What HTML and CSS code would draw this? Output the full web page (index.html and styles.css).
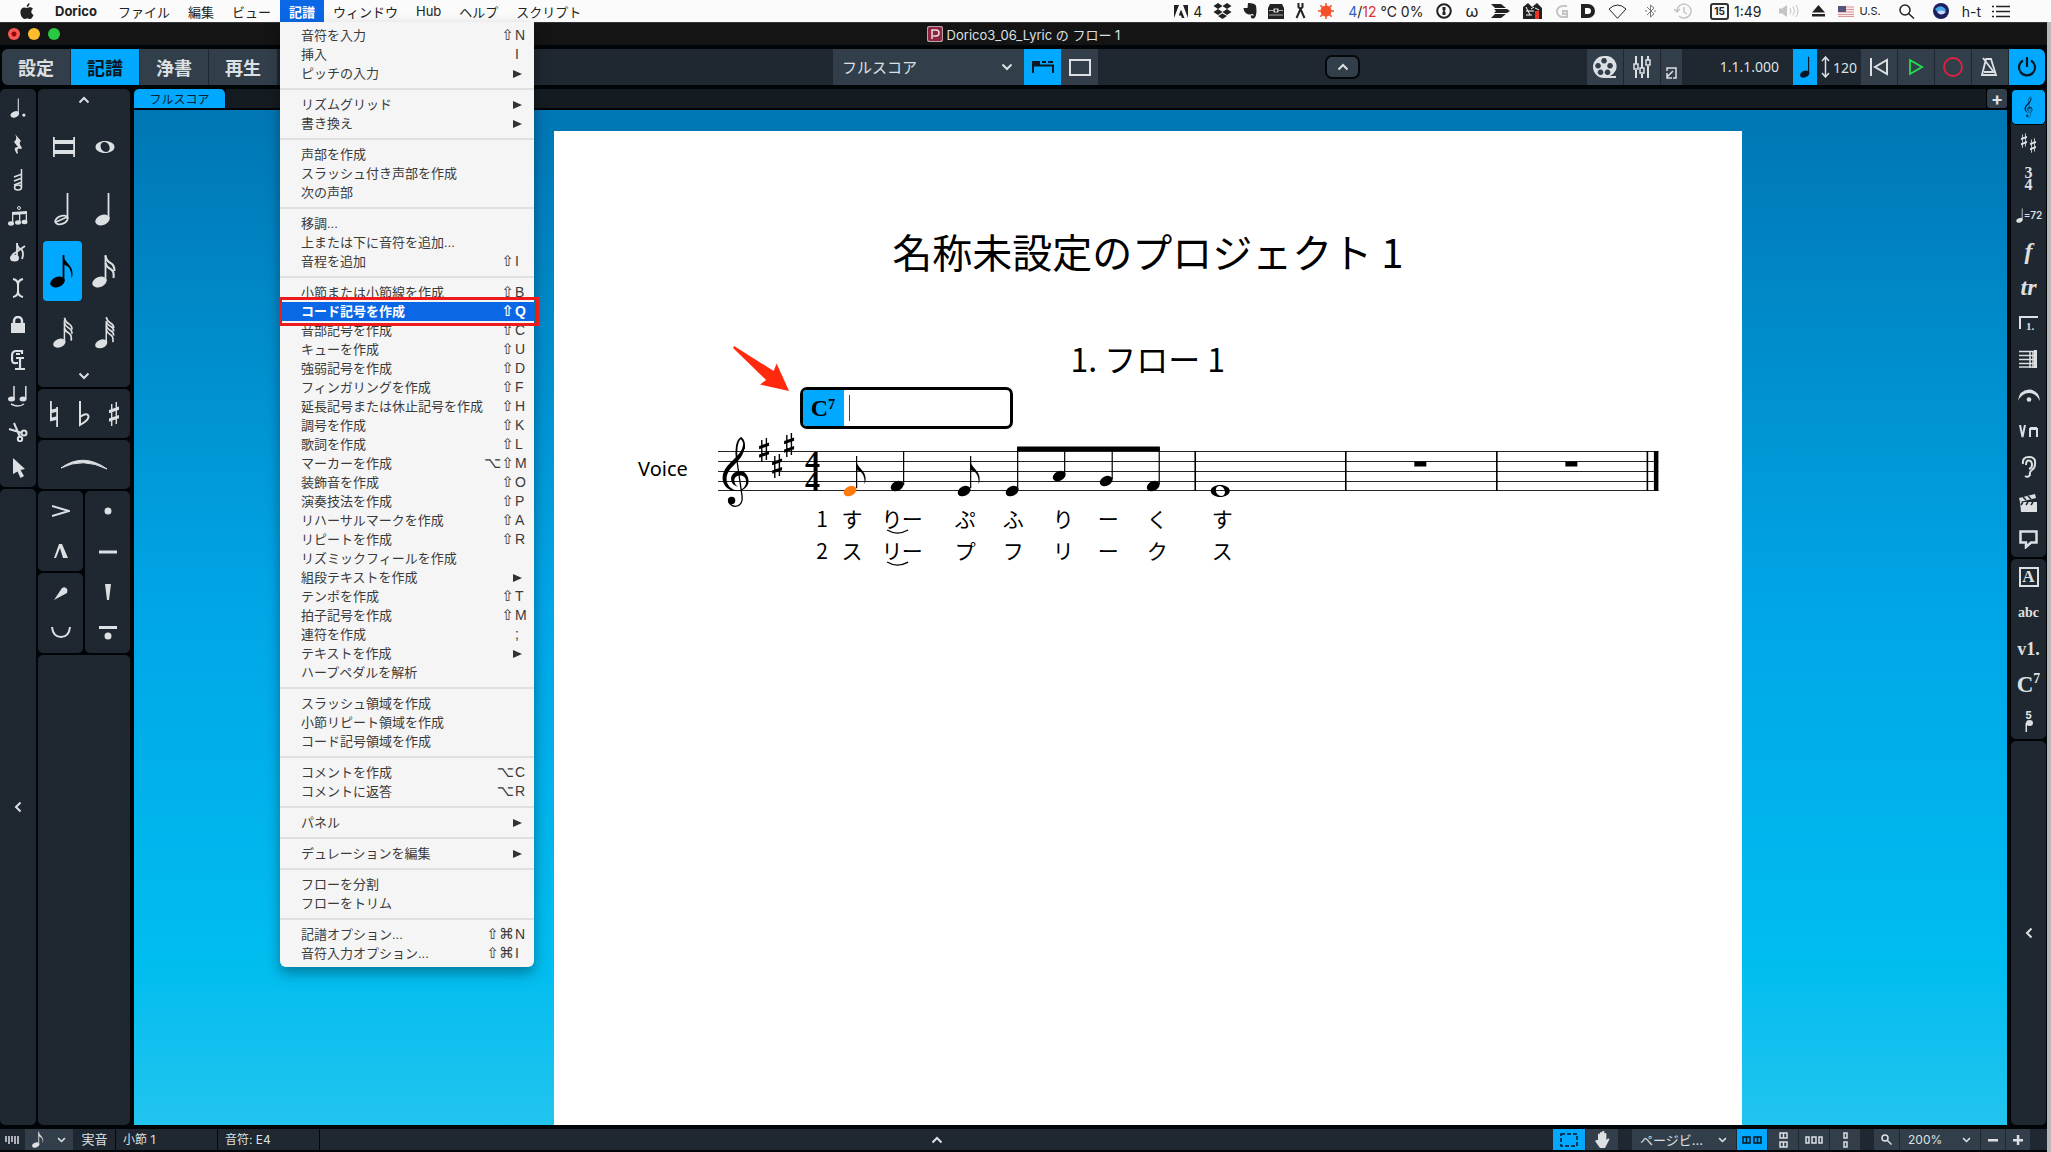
FILE: index.html
```html
<!DOCTYPE html>
<html lang="ja">
<head>
<meta charset="utf-8">
<title>Dorico3_06_Lyric の フロー 1</title>
<link rel="stylesheet" href="styles.css">
</head>
<body>
<svg class="defs" aria-hidden="true">
  <symbol id="clef" viewBox="721 436 29 72">
    <path d="M737 461C735 450 737 440 741 438C743.500 440 744.500 444 744 449" fill="none" stroke="currentColor" stroke-width="1.800"/>
    <path d="M744.800 445C744.500 455 738 461 733 466C728 471 726.500 475 726.500 479C726.500 485 731 489.500 737 490.500C728 492 722.500 485 722.500 478C722.500 469 730 463 735 458C740 453 742.500 450 743 444Z"/>
    <path d="M740 475.500C736 475.500 733.500 478 734.500 482C735 484 736 485.500 738 486.500C733.500 486 731 482.500 731 479C731 474.500 735 471 740 471C745 471 748.500 476 748.500 481C748.500 487 743 491.500 736 491.300C743 490 746 486 746 482C746 478 744 475.500 740 475.500Z"/>
    <path d="M736.500 458L742 496C743 502 740 506 735.500 506.300C732 506.300 729.500 504 728.500 501" fill="none" stroke="currentColor" stroke-width="1.300"/>
    <circle cx="731.500" cy="500.500" r="3.700"/>
  </symbol>
  <symbol id="head" viewBox="0 0 14 12"><ellipse cx="7" cy="6" rx="6.800" ry="4.700" transform="rotate(-27 7 6)"/></symbol>
  <symbol id="whole" viewBox="0 0 20 14"><path fill-rule="evenodd" d="M10 1C15 1 19.500 3.500 19.500 7S15 13 10 13S.5 10.500 .5 7S5 1 10 1ZM8 2.200C5 3 5 7 7 10C8.500 12 11.500 12.300 13 11.500C15.500 10 15 6 13 3.800C11.800 2.300 9.500 1.800 8 2.200Z"/></symbol>
  <symbol id="sharp" viewBox="0 0 12 28"><path d="M3 4h1.400v22H3zM7.600 2h1.400v22H7.600zM1 10L11 6.500v3.300L1 13.300zM1 18.500L11 15v3.300L1 21.800z"/></symbol>
  <symbol id="quarter" viewBox="0 0 24 34"><ellipse cx="9.500" cy="28" rx="7.500" ry="5" transform="rotate(-22 9.500 28)"/><path d="M14.600 1h1.800v26h-1.800z"/></symbol>
  <symbol id="flag" viewBox="0 0 10 24"><path d="M0 0C1 7 9.500 10 9.500 18C9.500 21 9 22.500 8.500 23.500C9 14 5 10.500 0 9.500Z"/></symbol>
  <symbol id="down" viewBox="0 0 12 8"><path d="M1.500 1.500L6 6L10.500 1.500" fill="none" stroke="currentColor" stroke-width="2"/></symbol>
  <symbol id="up" viewBox="0 0 12 8"><path d="M1.500 6.500L6 2L10.500 6.500" fill="none" stroke="currentColor" stroke-width="2"/></symbol>
  <symbol id="left" viewBox="0 0 8 12"><path d="M6.500 1.500L2 6L6.500 10.500" fill="none" stroke="currentColor" stroke-width="2"/></symbol>
</svg>

<header class="menubar">
  <nav class="menus">
    <button class="apple" aria-label="Apple"><svg width="14" height="17" viewBox="0 0 14 17"><path d="M9.500 0C9.800 2 8.200 4 6.700 4C6.500 2.200 8 .5 9.500 0ZM7 4.900C8 4.900 8.700 4.200 10 4.200C11.300 4.200 12.400 4.900 13 5.800C10.500 7.300 11 10.900 13.500 11.900C12.700 14 11.500 16 10.100 16C9 16 8.600 15.400 7.300 15.400S5.500 16 4.500 16C2.500 16 .4 12.300 .4 9.300C.4 6.200 2.300 4.400 4.200 4.400C5.400 4.400 6.300 4.900 7 4.900Z"/></svg></button>
    <button class="app-name">Dorico</button>
    <button>ファイル</button>
    <button>編集</button>
    <button>ビュー</button>
    <div class="open-menu">
      <button class="current">記譜</button>
      <div class="dropdown" role="menu">
        <button class="item">音符を入力<span class="mods">⇧</span><kbd>N</kbd></button>
        <button class="item">挿入<span class="mods"></span><kbd>I</kbd></button>
        <button class="item sub">ピッチの入力</button>
        <hr>
        <button class="item sub">リズムグリッド</button>
        <button class="item sub">書き換え</button>
        <hr>
        <button class="item">声部を作成</button>
        <button class="item">スラッシュ付き声部を作成</button>
        <button class="item">次の声部</button>
        <hr>
        <button class="item">移調...</button>
        <button class="item">上または下に音符を追加...</button>
        <button class="item">音程を追加<span class="mods">⇧</span><kbd>I</kbd></button>
        <hr>
        <button class="item">小節または小節線を作成<span class="mods">⇧</span><kbd>B</kbd></button>
        <button class="item chosen">コード記号を作成<span class="mods">⇧</span><kbd>Q</kbd></button>
        <button class="item">音部記号を作成<span class="mods">⇧</span><kbd>C</kbd></button>
        <button class="item">キューを作成<span class="mods">⇧</span><kbd>U</kbd></button>
        <button class="item">強弱記号を作成<span class="mods">⇧</span><kbd>D</kbd></button>
        <button class="item">フィンガリングを作成<span class="mods">⇧</span><kbd>F</kbd></button>
        <button class="item">延長記号または休止記号を作成<span class="mods">⇧</span><kbd>H</kbd></button>
        <button class="item">調号を作成<span class="mods">⇧</span><kbd>K</kbd></button>
        <button class="item">歌詞を作成<span class="mods">⇧</span><kbd>L</kbd></button>
        <button class="item">マーカーを作成<span class="mods">⌥⇧</span><kbd>M</kbd></button>
        <button class="item">装飾音を作成<span class="mods">⇧</span><kbd>O</kbd></button>
        <button class="item">演奏技法を作成<span class="mods">⇧</span><kbd>P</kbd></button>
        <button class="item">リハーサルマークを作成<span class="mods">⇧</span><kbd>A</kbd></button>
        <button class="item">リピートを作成<span class="mods">⇧</span><kbd>R</kbd></button>
        <button class="item">リズミックフィールを作成</button>
        <button class="item sub">組段テキストを作成</button>
        <button class="item">テンポを作成<span class="mods">⇧</span><kbd>T</kbd></button>
        <button class="item">拍子記号を作成<span class="mods">⇧</span><kbd>M</kbd></button>
        <button class="item">連符を作成<span class="mods"></span><kbd>;</kbd></button>
        <button class="item sub">テキストを作成</button>
        <button class="item">ハープペダルを解析</button>
        <hr>
        <button class="item">スラッシュ領域を作成</button>
        <button class="item">小節リピート領域を作成</button>
        <button class="item">コード記号領域を作成</button>
        <hr>
        <button class="item">コメントを作成<span class="mods">⌥</span><kbd>C</kbd></button>
        <button class="item">コメントに返答<span class="mods">⌥</span><kbd>R</kbd></button>
        <hr>
        <button class="item sub">パネル</button>
        <hr>
        <button class="item sub">デュレーションを編集</button>
        <hr>
        <button class="item">フローを分割</button>
        <button class="item">フローをトリム</button>
        <hr>
        <button class="item">記譜オプション...<span class="mods">⇧⌘</span><kbd>N</kbd></button>
        <button class="item">音符入力オプション...<span class="mods">⇧⌘</span><kbd>I</kbd></button>
      </div>
    </div>
    <button>ウィンドウ</button>
    <button>Hub</button>
    <button>ヘルプ</button>
    <button>スクリプト</button>
  </nav>
  <div class="extras">
    <span class="pair"><svg width="14" height="13" viewBox="0 0 14 13"><path d="M0 0h5L0 13zM14 0H9l5 13zM7 4.500L10.500 13H8L7 10.500H4.700z"/></svg>4</span>
    <svg class="tight" width="19" height="16" viewBox="0 0 19 16"><path d="M5 0l4.500 3L5 6L.5 3zM14 0l4.500 3L14 6L9.500 3zM5 6l4.500 3L5 12L.5 9zM14 6l4.500 3L14 12L9.500 9zM9.500 10.500L14 13l-4.500 3L5 13z"/></svg>
    <svg class="tight" width="14" height="16" viewBox="0 0 14 16"><path d="M5 0C9 0 13 1 13 3C14 8 13.500 15 10.500 15.500C8 16 7.500 14 8 12.500C9 12 10 12 10.500 13C11 11 9 10.500 8 11.500C6 12 1 11 .5 5H4.500z"/></svg>
    <svg class="tight" width="16" height="15" viewBox="0 0 16 15"><path d="M2 0h12l2 4v11H0V4z"/><path d="M1 6.500h14M1 11h14" stroke="#aaa"/><path d="M5.500 4.500h5v4h-5z" fill="#ddd"/><circle cx="8" cy="6.500" r="1.200"/></svg>
    <svg class="tight" width="11" height="16" viewBox="0 0 11 16" fill="none" stroke="currentColor" stroke-width="2"><path d="M3.500 0V4L5.500 6L7.500 4V0M5.500 6L1.500 15M5.500 6L9.500 15"/></svg>
    <svg class="sun tight" width="18" height="18" viewBox="0 0 18 18"><circle cx="9" cy="9" r="5.500"/><path d="M9 1v16M1 9h16M3.400 3.400l11.200 11.200M14.600 3.400L3.400 14.600" stroke="currentColor" stroke-width="1.500"/></svg>
    <span><b class="low">4</b>/<b class="high">12</b> ℃ 0%</span>
    <svg width="16" height="16" viewBox="0 0 16 16"><circle cx="8" cy="8" r="6.800" fill="none" stroke="currentColor" stroke-width="2"/><path d="M6.500 4h3v3l-1 1l1 1v3h-3V9l1-1l-1-1z"/></svg>
    <span class="omega">ω</span>
    <svg width="19" height="14" viewBox="0 0 19 14"><path d="M0 0h10l5 4H4zM3 5h13l3 2l-3 2H3l2-2zM0 14l4-4h11l-5 4z"/></svg>
    <svg width="19" height="16" viewBox="0 0 19 16"><path d="M0 4L5 0l4 4l5-4l5 5v11H0z"/><path d="M3 8h8M3 12h6M3 4l4 8M8 6l3-2M12 5l4 2" stroke="#fff"/><path d="M12 8h4v8h-4z" fill="#e32"/></svg>
    <svg class="faint" width="13" height="15" viewBox="0 0 13 15" fill="none" stroke="currentColor" stroke-width="2"><path d="M12 2H8a6 5.500 0 0 0 0 11h4V7H8v3h4"/></svg>
    <svg width="14" height="14" viewBox="0 0 14 14"><path d="M0 0h7a7 7 0 0 1 0 14H0z"/><path d="M4 4h3a3 3 0 0 1 0 6H4z" fill="#fff"/></svg>
    <svg width="19" height="15" viewBox="0 0 19 15" fill="none" stroke="currentColor"><path d="M1 5Q9.500-3 18 5L9.500 14.300z"/></svg>
    <svg class="airy" width="11" height="16" viewBox="0 0 11 16" fill="none" stroke="#777"><path d="M2 4l7 7l-3.500 3V2L9 5l-7 7M0 8h2M9 8h2"/></svg>
    <svg class="faint airy" width="18" height="16" viewBox="0 0 18 16" fill="none" stroke="currentColor" stroke-width="1.500"><path d="M3 8a7 7 0 1 1 2 5M0 6l3 3l3-3M10 4v5l3 2"/></svg>
    <span class="pair airy"><span class="cal">15</span>1:49</span>
    <svg class="faint airy" width="20" height="14" viewBox="0 0 20 14"><path d="M0 4.500h3L8 1v12L3 9.500H0z"/><path d="M11 4q2 3 0 6M14 2.500q3 4.500 0 9M17 1q4 6 0 12" fill="none" stroke="currentColor"/></svg>
    <svg width="13" height="12" viewBox="0 0 13 12"><path d="M6.500 0L13 7.500H0zM0 9h13v2.500H0z"/></svg>
    <span class="pair small"><svg width="16" height="11" viewBox="0 0 16 11"><path d="M0 0h16v11H0z" fill="#f4e9e9"/><path d="M0 1h16M0 3.500h16M0 6h16M0 8.500h16M0 10.500h16" stroke="#d99"/><path d="M0 0h8v6H0z" fill="#557"/></svg>U.S.</span>
    <svg class="airy" width="16" height="15" viewBox="0 0 16 15" fill="none" stroke="currentColor" stroke-width="1.500"><circle cx="6" cy="6" r="5"/><path d="M9.500 9.500L15 14.500"/></svg>
    <svg class="airy" width="16" height="16" viewBox="0 0 16 16"><circle cx="8" cy="8" r="8" fill="#1c1f5e"/><path d="M2 6q6-6 11 1q-5 8-11-1" fill="#4aa8e8"/><path d="M4 9q4 5 9 0q-5-3-9 0" fill="#c9d7f8"/></svg>
    <span>h-t</span>
    <svg class="tight" width="18" height="13" viewBox="0 0 18 13" fill="none" stroke="currentColor" stroke-width="1.500"><path d="M0 1.500h2M4 1.500h14M0 6.500h2M4 6.500h14M0 11.500h2M4 11.500h14"/></svg>
  </div>
</header>

<main class="window">
  <div class="titlebar">
    <div class="lights"><i class="close"></i><i class="mini"></i><i class="full"></i></div>
    <h1><svg width="16" height="16" viewBox="0 0 16 16"><rect width="16" height="16" rx="2" fill="#b9a3a8"/><rect x="1" y="1" width="14" height="14" rx="2" fill="#8e2440"/><path d="M5 13V4h4a3 3 0 0 1 0 6H6" fill="none" stroke="#e9dbe0" stroke-width="1.500"/></svg>Dorico3_06_Lyric の フロー 1</h1>
  </div>

  <div class="toolbar">
    <div class="modes"><button>設定</button><button class="on">記譜</button><button>浄書</button><button>再生</button></div>
    <div class="stretch-a"></div>
    <div class="layouts">
      <label class="picker"><select aria-label="レイアウト"><option>フルスコア</option></select><svg width="12" height="8"><use href="#down"/></svg></label>
      <button class="on" aria-label="タブ"><svg width="22" height="12" viewBox="0 0 22 12"><path d="M0 0h8v4H0zM10 0h4v2h-4zM16 0h5v2h-5z"/><path d="M1 12V4.500h20V12" fill="none" stroke="currentColor" stroke-width="2"/></svg></button>
      <button aria-label="ウィンドウ表示"><svg width="22" height="18" viewBox="0 0 22 18"><rect x="1" y="2" width="20" height="15" fill="none" stroke="currentColor" stroke-width="2"/></svg></button>
    </div>
    <div class="stretch-b"><button class="fold" aria-label="ツールバーを隠す"><svg width="12" height="8"><use href="#up"/></svg></button></div>
    <div class="transport">
      <button aria-label="ビデオ"><svg width="24" height="22" viewBox="0 0 24 22"><path fill-rule="evenodd" d="M11 0a11 10.500 0 0 1 6 20h6v2H11a11 11 0 0 1 0-22ZM11 2a2.800 2.800 0 1 0 .1 0ZM5 7a2.800 2.800 0 1 0 .1 0ZM17 7a2.800 2.800 0 1 0 .1 0ZM7.500 13.500a2.800 2.800 0 1 0 .1 0ZM14.500 13.500a2.800 2.800 0 1 0 .1 0Z"/></svg></button>
      <button aria-label="ミキサー"><svg width="18" height="22" viewBox="0 0 18 22" fill="none" stroke="currentColor" stroke-width="2"><path d="M3 0v8M3 14v8M9 0v12M9 18v4M15 0v4M15 10v12"/><path d="M1 8h4v5H1zM7 12h4v5H7zM13 4h4v5h-4z" stroke-width="1.500"/></svg></button>
      <button class="slim" aria-label="トランスポート"><svg width="11" height="12" viewBox="0 0 11 12" fill="none" stroke="currentColor" stroke-width="1.500"><path d="M1 4V1h9v10H7M7 4L1 10M1 6v5h5"/></svg></button>
      <output>1.1.1.000</output>
      <button class="on beat" aria-label="テンポモード"><svg width="14" height="22" viewBox="1 0 18 34"><use href="#quarter" width="24" height="34"/></svg></button>
      <span class="tempo"><svg width="9" height="22" viewBox="0 0 9 22" fill="none" stroke="currentColor" stroke-width="1.500"><path d="M4.500 1v20M1 5l3.500-4L8 5M1 17l3.500 4L8 17"/></svg>120</span>
      <button aria-label="先頭へ"><svg width="20" height="18" viewBox="0 0 20 18" fill="none" stroke="currentColor" stroke-width="2"><path d="M2 0v18M18 2v14L6 9z"/></svg></button>
      <button class="play" aria-label="再生"><svg width="16" height="18" viewBox="0 0 16 18" fill="none" stroke="currentColor" stroke-width="1.800"><path d="M2 2v14L14 9z"/></svg></button>
      <button class="rec" aria-label="録音"><svg width="20" height="20" viewBox="0 0 20 20" fill="none" stroke="currentColor" stroke-width="1.800"><circle cx="10" cy="10" r="9"/></svg></button>
      <button aria-label="クリック"><svg width="18" height="20" viewBox="0 0 18 20" fill="none" stroke="currentColor" stroke-width="1.800"><path d="M1 18L5 2h5l5 16zM12 14L2 1M3 15h11"/></svg></button>
      <button class="on power" aria-label="オーディオ"><svg width="20" height="20" viewBox="0 0 20 20" fill="none" stroke="currentColor" stroke-width="2.200"><path d="M6 3.500a8 8 0 1 0 8 0M10 0v10"/></svg></button>
    </div>
  </div>

  <div class="work">
    <div class="column tools">
      <div class="panel toolset">
        <button aria-label="付点"><svg width="20" height="20" viewBox="0 0 30 34"><use href="#quarter" width="24" height="34"/><circle cx="25" cy="29" r="2.800"/></svg></button>
        <button aria-label="休符"><svg width="10" height="20" viewBox="0 0 10 20"><path d="M2 0L8 7Q5 9 9 14L8 15Q3 13 5 19L4 20Q-1 13 5 13L1 8Q5 5 2 0Z"/></svg></button>
        <button aria-label="トレモロ"><svg width="10" height="22" viewBox="0 0 10 22" fill="none" stroke="currentColor" stroke-width="1.500"><path d="M8.500 0v18M1 8l8-3M1 12l8-3M1 16l8-3"/><ellipse cx="5" cy="18.500" rx="3.500" ry="2.500"/></svg></button>
        <button aria-label="連符"><svg width="20" height="20" viewBox="0 0 20 20"><path d="M4 6L19 5v3L4 9zM4 6h1.300v11H4zM11 6h1.300v10H11zM17.700 6H19v10h-1.300z"/><ellipse cx="3" cy="17.500" rx="3" ry="2.200"/><ellipse cx="10" cy="16.500" rx="3" ry="2.200"/><ellipse cx="16.500" cy="16" rx="3" ry="2.200"/><circle cx="11" cy="2" r="1.500" fill="none" stroke="currentColor"/></svg></button>
        <button aria-label="装飾音"><svg width="16" height="20" viewBox="0 0 16 20"><ellipse cx="4.500" cy="16" rx="4.500" ry="3.500"/><path d="M7 16V1q0 5 5 7q2 4 0 9M2 13L15 4" fill="none" stroke="currentColor" stroke-width="1.800"/></svg></button>
        <button aria-label="挿入"><svg width="12" height="20" viewBox="0 0 12 20" fill="none" stroke="currentColor" stroke-width="2"><path d="M1 1q5 1 5 6v6q0 5-5 6M11 1q-5 1-5 6v6q0 5 5 6"/></svg></button>
        <button aria-label="固定"><svg width="14" height="17" viewBox="0 0 14 17"><path d="M0 7h14v10H0z"/><path d="M3 8V5a4 4 0 0 1 8 0v3" fill="none" stroke="currentColor" stroke-width="2.500"/></svg></button>
        <button aria-label="留め具"><svg width="14" height="22" viewBox="0 0 14 22" fill="none" stroke="currentColor" stroke-width="2.200"><path d="M11 5V2H5Q1 2 1 7V10Q1 15 5 14H7M5 9h8M9 9v11M4 20h10M5 5h4"/></svg></button>
        <button aria-label="タイ"><svg width="20" height="22" viewBox="0 0 20 22"><ellipse cx="3.500" cy="14" rx="3.500" ry="2.500"/><ellipse cx="15" cy="14" rx="3.500" ry="2.500"/><path d="M6 1v13M17.800 1v13M3 19q7 4 13 0" fill="none" stroke="currentColor" stroke-width="1.500"/></svg></button>
        <button aria-label="はさみ"><svg width="20" height="20" viewBox="0 0 20 20" fill="none" stroke="currentColor" stroke-width="2"><path d="M1 7L14 11M6 1L12 15"/><circle cx="16" cy="11" r="2.500"/><circle cx="12" cy="17" r="2.200"/></svg></button>
        <button aria-label="選択"><svg width="13" height="20" viewBox="0 0 13 20"><path d="M1 0L13 11L8.500 12L12 18L8.500 20L5.500 13.500L1 16z"/></svg></button>
      </div>
      <div class="panel rest"><button aria-label="パネルを開く"><svg width="8" height="12"><use href="#left"/></svg></button></div>
    </div>

    <div class="column palette">
      <div class="panel durations">
        <button class="scroll" aria-label="上へ"><svg width="12" height="8"><use href="#up"/></svg></button>
        <div class="notes">
          <button aria-label="倍全音符"><svg width="24" height="20" viewBox="0 0 24 20"><path d="M1 0h1.800v20H1zM21.200 0H23v20h-1.800zM2 3h20v4H2zM2 13h20v4H2z"/></svg></button>
          <button aria-label="全音符"><svg width="20" height="14"><use href="#whole"/></svg></button>
          <button aria-label="2分音符"><svg width="24" height="34" viewBox="0 0 24 34"><ellipse cx="9.500" cy="28" rx="6.500" ry="4" transform="rotate(-22 9.500 28)" fill="none" stroke="currentColor" stroke-width="1.800"/><path d="M4 30L15 25" stroke="currentColor" stroke-width="1.500"/><path d="M14.600 1h1.800v26h-1.800z"/></svg></button>
          <button aria-label="4分音符"><svg width="24" height="34"><use href="#quarter"/></svg></button>
          <button class="on" aria-label="8分音符"><svg width="26" height="34" viewBox="2 0 26 34"><use href="#quarter" width="24" height="34"/><use href="#flag" x="15" y="1" width="10" height="24"/></svg></button>
          <button aria-label="16分音符"><svg width="26" height="34" viewBox="2 0 26 34"><use href="#quarter" width="24" height="34"/><path d="M15.500 2q1 5 5 7t4 8M15.500 9q1 4 5 6t3 9" fill="none" stroke="currentColor" stroke-width="2"/></svg></button>
          <button aria-label="32分音符"><svg width="22" height="34" viewBox="2 0 26 38"><use href="#quarter" y="3" width="24" height="34"/><path d="M15.500 1q1 5 5 7t4 7M15.500 7q1 4 5 6t4 7M15.500 13q1 4 5 6t3 9" fill="none" stroke="currentColor" stroke-width="2"/></svg></button>
          <button aria-label="64分音符"><svg width="20" height="34" viewBox="2 0 24 40"><use href="#quarter" y="5" width="24" height="34"/><path d="M15.500 1q1 5 5 7t4 6M15.500 6q1 4 5 6t4 6M15.500 11q1 4 5 6t4 6M15.500 16q1 4 5 6t3 9" fill="none" stroke="currentColor" stroke-width="2"/></svg></button>
        </div>
        <button class="scroll" aria-label="下へ"><svg width="12" height="8"><use href="#down"/></svg></button>
      </div>
      <div class="panel accidentals">
        <button aria-label="ナチュラル"><svg width="10" height="26" viewBox="0 0 10 26"><path d="M1 0h1.800v20H1zM7.200 6H9v20H7.200zM1 9L9 7v3.500L1 12.500zM1 17L9 15v3.500L1 20.500z"/></svg></button>
        <button aria-label="フラット"><svg width="12" height="26" viewBox="0 0 12 26"><path d="M2 0v24Q11 19 10.500 15Q9 11 2 16" fill="none" stroke="currentColor" stroke-width="2"/></svg></button>
        <button aria-label="シャープ"><svg width="12" height="28"><use href="#sharp"/></svg></button>
      </div>
      <div class="panel slur"><button aria-label="スラー"><svg width="46" height="11" viewBox="0 0 46 11"><path d="M0 9Q22-7 46 10Q22-2 0 9Z" stroke="currentColor"/></svg></button></div>
      <div class="articulations">
        <div class="panel"><button aria-label="アクセント"><svg width="18" height="12" viewBox="0 0 18 12" fill="none" stroke="currentColor" stroke-width="2"><path d="M0 1L17 6L0 11"/></svg></button><button aria-label="マルカート"><svg width="14" height="14" viewBox="0 0 14 14"><path d="M5 0h3l6 14h-5L6 4L2 14H0z"/></svg></button></div>
        <div class="panel tall"><button aria-label="スタッカート"><svg width="18" height="18" viewBox="0 0 18 18"><circle cx="9" cy="9" r="3.500"/></svg></button><button aria-label="テヌート"><svg width="18" height="4" viewBox="0 0 18 4"><path d="M0 .5h18v3H0z"/></svg></button><button aria-label="スタッカティッシモ"><svg width="8" height="16" viewBox="0 0 8 16"><path d="M1 0h6L5 16H3z"/></svg></button><button aria-label="ポルタート"><svg width="18" height="14" viewBox="0 0 18 14"><path d="M0 0h18v3H0z"/><circle cx="9" cy="10" r="3.500"/></svg></button></div>
        <div class="panel"><button aria-label="強勢"><svg width="14" height="13" viewBox="0 0 14 13"><path d="M0 13L8 1Q12-1 13.500 3L13 6z"/></svg></button><button aria-label="弱勢"><svg width="20" height="12" viewBox="0 0 20 12" fill="none" stroke="currentColor" stroke-width="2"><path d="M1 0q1 10 9 10t9-10"/></svg></button></div>
      </div>
      <div class="panel rest"></div>
    </div>

    <section class="canvas">
      <div class="tabs"><button class="tab">フルスコア</button><span class="track"></span><button class="add" aria-label="タブを追加">+</button></div>
      <div class="desk">
        <article class="page">
          <h2>名称未設定のプロジェクト 1</h2>
          <h3>1. フロー 1</h3>
          <div class="system">
            <svg class="staff" viewBox="554 384 1188 180">
              <path d="M718 451.500h940M718 461.500h940M718 471.500h940M718 481.500h940M718 490.500h940" stroke="#222" stroke-width="1"/>
              <path d="M1195 451v40M1345.500 451v40M1496.500 451v40M1647 451v40" stroke="#000" stroke-width="1.600"/>
              <path d="M1653.500 451h4.500v40h-4.500zM1414 461.500h12v5h-12zM1565 461.500h12v5h-12z"/>
              <use href="#clef" x="721" y="436" width="29" height="72"/>
              <use href="#sharp" x="758" y="436" width="12" height="28"/><use href="#sharp" x="771" y="452" width="12" height="28"/><use href="#sharp" x="783" y="431" width="12" height="28"/>
              <text class="meter" x="812.500" y="471">4</text><text class="meter" x="812.500" y="491">4</text>
              <g class="selected"><use href="#head" x="843" y="485" width="14" height="12"/></g>
              <use href="#head" x="890" y="480" width="14" height="12"/><use href="#head" x="957" y="485" width="14" height="12"/><use href="#head" x="1005" y="485" width="14" height="12"/><use href="#head" x="1052" y="470" width="14" height="12"/><use href="#head" x="1099" y="475" width="14" height="12"/><use href="#head" x="1146" y="480" width="14" height="12"/>
              <use href="#whole" x="1210" y="484" width="20" height="14"/>
              <path d="M856.500 456v32M903.500 451v34M970.500 456v32M1017.500 447v42M1064.500 447v27M1112 447v32M1159 447v37" stroke="#000" stroke-width="1.200"/>
              <use href="#flag" x="856" y="456" width="10" height="33"/><use href="#flag" x="970" y="456" width="10" height="33"/>
              <path d="M1017 446.500h142.500v4.500H1017z"/>
              <text class="name" x="638" y="476">Voice</text>
              <g class="lyric">
                <text x="822" y="527">1</text><text x="852" y="527">す</text><text x="892" y="527">り</text><text x="912" y="527">ー</text><text x="965" y="527">ぷ</text><text x="1013" y="527">ふ</text><text x="1063" y="527">り</text><text x="1108" y="527">ー</text><text x="1157" y="527">く</text><text x="1222" y="527">す</text>
                <text x="822" y="559">2</text><text x="852" y="559">ス</text><text x="892" y="559">リ</text><text x="912" y="559">ー</text><text x="965" y="559">プ</text><text x="1013" y="559">フ</text><text x="1063" y="559">リ</text><text x="1108" y="559">ー</text><text x="1157" y="559">ク</text><text x="1222" y="559">ス</text>
              </g>
              <path d="M887 530Q897 536 908 530M887 562Q897 568 908 562" fill="none" stroke="#000" stroke-width="1.300"/>
              <path d="M734 346L773.600 371L776.500 363.500L789 391L760 384.500L766 380L733 348Z" fill="#ff2a0d"/>
            </svg>
            <label class="popover"><span>C<sup>7</sup></span><input type="text" value="" aria-label="コード記号" autofocus><i></i></label>
          </div>
        </article>
      </div>
    </section>

    <div class="column rail">
      <div class="panel">
        <button class="on" aria-label="音部記号"><svg width="11" height="22"><use href="#clef"/></svg></button>
        <button aria-label="調号"><svg width="18" height="22" viewBox="0 0 18 22"><use href="#sharp" width="8" height="17"/><use href="#sharp" x="9" y="5" width="8" height="17"/></svg></button>
        <button class="serif meter-icon"><span>3</span><span>4</span></button>
        <button class="tiny"><svg width="9" height="15" viewBox="1 0 17 34"><use href="#quarter" width="24" height="34"/></svg>=72</button>
        <button class="serif italic">f</button>
        <button class="serif italic">tr</button>
        <button class="volta">1.</button>
        <button aria-label="小節と小節線"><svg width="19" height="18" viewBox="0 0 19 18"><path d="M0 1.500h18M0 5.500h18M0 9.500h18M0 13.500h18M0 17h18M11 1v17M14 1v17" stroke="currentColor" stroke-width="1.500"/><path d="M15 0h3v18h-3z"/></svg></button>
        <button aria-label="延長記号"><svg width="22" height="13" viewBox="0 0 22 13"><path d="M0 12Q1 1 11 .5Q21 1 22 12Q18 4 11 4T0 12Z"/><circle cx="11" cy="10.500" r="2.300"/></svg></button>
        <button aria-label="演奏技法"><svg width="19" height="13" viewBox="0 0 19 13" fill="none" stroke="currentColor" stroke-width="2"><path d="M1 0l2.500 12L6 0M11 12V4h7v8M11 3h7"/></svg></button>
        <button aria-label="演奏"><svg width="16" height="24" viewBox="0 0 16 24" fill="none" stroke="currentColor" stroke-width="2"><path d="M2 9Q1 2 8 2T14 9Q14 13 11 15T9 20Q7 23 4 21M5 10Q5 5 8 5.500T11 10Q11 13 8 14"/></svg></button>
        <button aria-label="ビデオ"><svg width="19" height="19" viewBox="0 0 19 19"><path d="M1 8h17v10H2zM0 4L16 0l1 4L1 8z"/><path d="M4 3l3 3M9 2l3 3M4 8l-2 3M9 8l-2 3M14 8l-2 3" stroke="#1f2730" stroke-width="1.500"/></svg></button>
        <button aria-label="コメント"><svg width="19" height="19" viewBox="0 0 19 19" fill="none" stroke="currentColor" stroke-width="2.500"><path d="M1.500 1.500h16v11H12L7 17v-4.500H1.500z"/></svg></button>
      </div>
      <div class="panel">
        <button class="serif"><span class="boxed">A</span></button>
        <button class="serif abc">abc</button>
        <button class="serif verse">v1.</button>
        <button class="serif chord">C<sup>7</sup></button>
        <button class="finger"><span>5</span><svg width="8" height="12" viewBox="0 0 8 12"><ellipse cx="4.500" cy="3" rx="3.500" ry="3"/><path d="M.5 3H2v9H.5z"/></svg></button>
      </div>
      <div class="panel rest"><button aria-label="パネルを開く"><svg width="8" height="12"><use href="#left"/></svg></button></div>
    </div>
  </div>

  <footer class="status">
    <button class="keys" aria-label="鍵盤"><svg width="14" height="8" viewBox="0 0 14 8"><path d="M1 0v6M4 0v8M7 0v6M10 0v8M13 0v8" stroke="currentColor" stroke-width="1.500"/></svg></button>
    <button class="lit note-input" aria-label="入力"><svg width="13" height="17" viewBox="2 0 26 34"><use href="#quarter" width="24" height="34"/><use href="#flag" x="15" y="1" width="10" height="24"/></svg><svg width="9" height="6"><use href="#down"/></svg></button>
    <span class="pitch">実音</span>
    <span class="where">小節 1</span>
    <span class="where">音符: E4</span>
    <div class="middle"><button aria-label="下段パネル"><svg width="12" height="8"><use href="#up"/></svg></button></div>
    <button class="on" aria-label="範囲選択"><svg width="18" height="14" viewBox="0 0 18 14" fill="none" stroke="currentColor" stroke-width="1.500"><rect x="1" y="1" width="16" height="12" stroke-dasharray="4 2"/></svg></button>
    <button class="lit" aria-label="手のひら"><svg width="15" height="17" viewBox="0 0 15 17"><path d="M3 9V3.500a1 1 0 0 1 2 0V7V2a1 1 0 0 1 2.200 0V7V1a1 1 0 0 1 2.200 0V7V3a1 1 0 0 1 2 0V9l1.500-1.500q1.500-.5 1.500 1L11 15L10 17H5L0 10q1-1.500 3-1z"/></svg></button>
    <span class="gap"></span>
    <label class="picker lit"><select aria-label="表示"><option>ページビ...</option></select><svg width="9" height="6"><use href="#down"/></svg></label>
    <button class="on arrange" aria-label="見開き横"><svg width="20" height="8" viewBox="0 0 20 8" fill="none" stroke="currentColor" stroke-width="1.500"><path d="M1 1h7v6H1zM4.500 1v6M12 1h7v6h-7zM15.500 1v6"/></svg></button>
    <button class="lit arrange" aria-label="見開き縦"><svg width="9" height="16" viewBox="0 0 9 16" fill="none" stroke="currentColor" stroke-width="1.500"><path d="M1 1h7v5H1zM4.500 1v5M1 10h7v5H1zM4.500 10v5"/></svg></button>
    <button class="lit arrange" aria-label="単一横"><svg width="18" height="8" viewBox="0 0 18 8" fill="none" stroke="currentColor" stroke-width="1.500"><path d="M1 1h3v6H1zM7 1h4v6H7zM14 1h3v6h-3z"/></svg></button>
    <button class="lit arrange" aria-label="単一縦"><svg width="5" height="16" viewBox="0 0 5 16" fill="none" stroke="currentColor" stroke-width="1.500"><path d="M1 1h3v5H1zM1 10h3v5H1z"/></svg></button>
    <span class="gap"></span>
    <button class="lit zoom-icon" aria-label="ズーム"><svg width="11" height="11" viewBox="0 0 11 11" fill="none" stroke="currentColor" stroke-width="1.500"><circle cx="4" cy="4" r="3"/><path d="M6 6l4.500 4.500"/></svg></button>
    <label class="picker zoom lit"><select aria-label="倍率"><option>200%</option></select><svg width="9" height="6"><use href="#down"/></svg></label>
    <button class="lit step" aria-label="縮小"><svg width="10" height="10" viewBox="0 0 10 10"><path d="M0 4h10v2.500H0z"/></svg></button>
    <button class="lit step" aria-label="拡大"><svg width="10" height="10" viewBox="0 0 10 10"><path d="M0 4h10v2.500H0zM3.800 0h2.500v10H3.800z"/></svg></button>
    <span class="gap"></span>
  </footer>
</main>
</body>
</html>
```
FILE: styles.css
```css
* { box-sizing: border-box; }

body {
  margin: 0;
  min-height: 100vh;
  display: flex;
  flex-direction: column;
  overflow: hidden;
  background: #b9b7b9;
  font-family: Inter, "Noto Sans CJK JP", sans-serif;
  font-size: 13px;
  color: #dde0e3;
}

button, select, input {
  margin: 0;
  padding: 0;
  border: 0;
  background: none;
  font: inherit;
  color: inherit;
}

button {
  display: flex;
  align-items: center;
  justify-content: center;
  white-space: nowrap;
}

svg { display: block; flex: none; fill: currentColor; }
svg[fill="none"] { fill: none; }
.defs { position: absolute; width: 0; height: 0; }

/* system menu bar */
.menubar {
  height: 22px;
  display: flex;
  justify-content: space-between;
  background: #fbfbfb;
  color: #222;
}
.menus { display: flex; padding-left: 12px; }
.menus > button, .current { height: 22px; padding: 0 9px; }
.menus .apple { padding: 0 8px; margin-right: 4px; }
.menus .app-name { font-weight: 700; margin-right: 3px; }
.open-menu { position: relative; }
.current { background: #0a68e6; color: #fff; font-weight: 700; }

.dropdown {
  position: absolute;
  z-index: 5;
  top: 22px;
  left: 0;
  width: 254px;
  padding: 4px 0;
  background: #f5f5f5;
  border-radius: 0 0 6px 6px;
  box-shadow: 0 6px 14px rgba(0, 0, 0, .35);
  color: #3a3a3a;
}
.item {
  width: 100%;
  height: 19px;
  padding: 0 7px 0 21px;
  justify-content: flex-start;
  font-family: "Liberation Sans", "Noto Sans CJK JP", sans-serif;
  line-height: 19px;
}
.mods {
  margin-left: auto;
  font-family: "DejaVu Sans", sans-serif;
  font-size: 15px;
}
.item kbd { width: 12px; margin-left: 1px; font: inherit; font-size: 14px; text-align: left; }
.sub::after {
  content: "";
  margin-left: auto;
  margin-right: 5px;
  border: solid transparent;
  border-width: 4px 0 4px 9px;
  border-left-color: #333;
}
.chosen { position: relative; background: #0a68e6; color: #fff; font-weight: 700; }
.chosen::after {
  content: "";
  position: absolute;
  inset: -5px -5px -5px -1px;
  border: 3px solid #ec1c1c;
}
.dropdown hr {
  height: 2px;
  margin: 5px 0;
  border: 0;
  background: #e0e0e0;
}

.extras { display: flex; align-items: center; gap: 13px; padding-right: 41px; font-size: 14px; }
.extras .airy { margin-left: 5px; }
.extras .tight { margin-left: -2px; }
.pair { display: flex; align-items: center; gap: 5px; }
.small { font-size: 11px; }
.omega { font-size: 16px; }
.sun { color: #f4502a; }
.low { color: #2b62c9; font-weight: 400; }
.high { color: #d8332c; font-weight: 400; }
.faint { color: #c4c4c4; }
.cal { border: 2px solid #333; border-radius: 3px; padding: 0 2px; font-size: 10px; line-height: 13px; font-weight: 700; }

/* application window */
.window {
  flex: 1;
  margin-right: 4px;
  padding-bottom: 2px;
  display: flex;
  flex-direction: column;
  background: #020508;
}
.titlebar {
  position: relative;
  height: 23px;
  display: flex;
  align-items: center;
  justify-content: center;
  background: #141414;
  border-top: 1px solid #333;
}
.titlebar h1 {
  display: flex;
  align-items: center;
  gap: 4px;
  margin: 0;
  font-size: 13px;
  font-weight: 400;
}
.lights { position: absolute; left: 8px; display: flex; gap: 8px; }
.lights i { width: 12px; height: 12px; border-radius: 50%; }
.close { background: radial-gradient(#8c0b08 2px, #fb5753 3px); }
.mini { background: #fdbd2f; }
.full { background: #28c840; }

.toolbar {
  display: flex;
  height: 36px;
  margin: 4px 2px;
  background: #1f2730;
  border-radius: 6px;
  overflow: hidden;
}
.modes, .layouts, .transport { display: flex; }
.modes button { width: 68px; margin-right: 1px; background: #323f4b; font-size: 18px; font-weight: 700; }
.toolbar .on, .status .on { background: #00a9ff; color: #0a1722; }
.stretch-a { flex: 555; }
.stretch-b { flex: 489; display: flex; align-items: center; justify-content: center; }
.layouts button { width: 37px; background: #323f4b; }
.picker { display: flex; align-items: center; background: #323f4b; }
.picker select { flex: 1; appearance: none; outline: 0; }
.layouts .picker { width: 191px; padding: 0 11px 0 9px; font-size: 15px; }
.fold { width: 35px; height: 24px; border: 2px solid #05080b; border-radius: 7px; background: #323f4b; }
.transport button { width: 36px; margin-right: 1px; background: #323f4b; }
.transport .slim { width: 21px; margin-right: 0; padding-top: 12px; }
.transport output {
  width: 111px;
  padding-right: 14px;
  text-align: right;
  line-height: 36px;
  font-family: "Noto Sans", sans-serif;
  font-size: 14px;
}
.transport .beat { width: 24px; margin: 0; }
.tempo {
  width: 44px;
  display: flex;
  align-items: center;
  justify-content: center;
  gap: 3px;
  font-family: "Noto Sans", sans-serif;
  font-size: 14px;
}
.transport .play { color: #22e04b; }
.transport .rec { color: #e0213f; }
.transport .power { margin: 0; }

.work { flex: 1; display: flex; }
.column { display: flex; flex-direction: column; gap: 2px; }
.panel { background: #1f2730; border-radius: 5px; }
.rest { flex: 1; display: flex; align-items: center; justify-content: center; }

.tools { width: 36px; margin-right: 2px; }
.toolset { padding: 1px 0; }
.toolset button, .rail .panel > button { width: 100%; height: 36px; }

.palette { width: 92px; margin-right: 4px; }
.durations { padding: 0 3px; }
.scroll { width: 100%; height: 22px; }
.notes {
  display: grid;
  grid-template-columns: 43px 39px;
  grid-auto-rows: 62px;
  padding: 5px 0 1px;
}
.notes button { margin: 1px 0 1px 2px; border-radius: 4px; }
.notes .on { margin-right: 2px; background: #00a9ff; color: #000; }
.accidentals { height: 49px; display: flex; padding: 0 1px; }
.accidentals button { flex: 1; }
.slur { height: 49px; display: flex; justify-content: center; }
.articulations { display: grid; grid-template-columns: 1fr 1fr; grid-template-rows: 80px 80px; gap: 2px; }
.articulations .panel { display: flex; flex-direction: column; }
.articulations .tall { grid-row: span 2; }
.articulations button { flex: 1; }

.canvas { flex: 1; display: flex; flex-direction: column; min-width: 0; }
.tabs { height: 21px; display: flex; gap: 1px; padding-bottom: 2px; }
.tab { width: 91px; background: #00a9ff; border-radius: 5px 5px 0 0; color: #0a2233; font-size: 12px; }
.track { flex: 1; background: #141c22; }
.add { width: 20px; background: #323f4b; font-size: 18px; font-weight: 700; line-height: 18px; border-radius: 3px; }
.desk {
  flex: 1;
  display: flex;
  padding: 21px 14.15% 0 22.4%;
  background: linear-gradient(#0076b4, #00a5e6 48%, #00bdf0 84%, #22c4ee);
}
.page {
  flex: 1;
  padding-top: 90px;
  background: #fff;
  color: #000;
  font-family: "Noto Sans CJK JP", sans-serif;
  text-align: center;
}
.page h2 { margin: 0; font-size: 40px; line-height: 60px; font-weight: 400; }
.page h3 { margin: 53px 0 2px; font-size: 32px; line-height: 48px; font-weight: 400; }
.system { position: relative; }
.staff { width: 100%; overflow: visible; }
.staff .name { font: 20px "Noto Sans", sans-serif; }
.staff .meter { font: 700 30px "Liberation Serif", serif; text-anchor: middle; }
.lyric { font-size: 21px; text-anchor: middle; }
.selected { fill: #ff7a0a; }
.popover {
  position: absolute;
  top: 3px;
  left: 246px;
  width: 213px;
  height: 42px;
  display: flex;
  border: 3px solid #000;
  border-radius: 7px;
  background: #fff;
  overflow: hidden;
}
.popover span {
  width: 41px;
  background: #00a9ff;
  font: 700 24px/36px "Liberation Serif", serif;
}
.popover sup, .chord sup { font-size: 60%; line-height: 0; vertical-align: 7px; }
.popover input { order: 2; flex: 1; min-width: 0; outline: 0; caret-color: transparent; }
.popover i { width: 1px; margin: 5px 0 5px 5px; background: #444; }

.rail { width: 35px; margin: 0 1px 0 4px; }
.rail .on { background: #00a9ff; color: #0a1722; border: 1px solid #020508; border-radius: 5px; }
.rail .panel > .serif { font-family: "Liberation Serif", serif; font-weight: 700; }
.rail .panel > .italic { font-style: italic; font-size: 24px; }
.rail .panel > .meter-icon { flex-direction: column; font-size: 16px; line-height: 12px; }
.tiny { font-size: 10px; font-weight: 600; }
.rail .volta { position: relative; padding: 5px 0 0 3px; font: 700 11px "Liberation Serif", serif; }
.volta::before {
  content: "";
  position: absolute;
  inset: 11px 8px 12px 8px;
  border: solid;
  border-width: 2px 0 0 2px;
}
.boxed { width: 20px; border: 2px solid; line-height: 16px; font-size: 17px; }
.rail .panel > .abc { font-size: 14px; }
.rail .panel > .verse { font-size: 18px; }
.rail .panel > .chord { font-size: 23px; }
.chord sup { margin-top: -12px; }
.finger { flex-direction: column; font-size: 10px; font-weight: 800; line-height: 9px; }

.status {
  height: 21px;
  display: flex;
  margin-top: 4px;
  background: #1f2730;
}
.status > button { width: 32px; margin-right: 1px; }
.status .lit { background: #323f4b; }
.status .keys { width: 24px; }
.status .note-input { width: 48px; gap: 12px; }
.status .pitch { width: 42px; line-height: 21px; text-align: center; border-right: 1px solid #05080b; }
.where { width: 102px; padding-left: 7px; line-height: 21px; border-right: 1px solid #05080b; font-size: 12px; }
.middle { flex: 1; display: flex; align-items: center; justify-content: center; }
.gap { width: 13px; }
.status .picker { width: 104px; margin-right: 1px; padding: 0 9px 0 8px; }
.status .arrange { width: 30px; }
.status .zoom-icon { width: 25px; }
.status .zoom { width: 80px; font-size: 12px; }
.status .step { width: 24px; }
.status .gap:last-child { width: 16px; }
```
